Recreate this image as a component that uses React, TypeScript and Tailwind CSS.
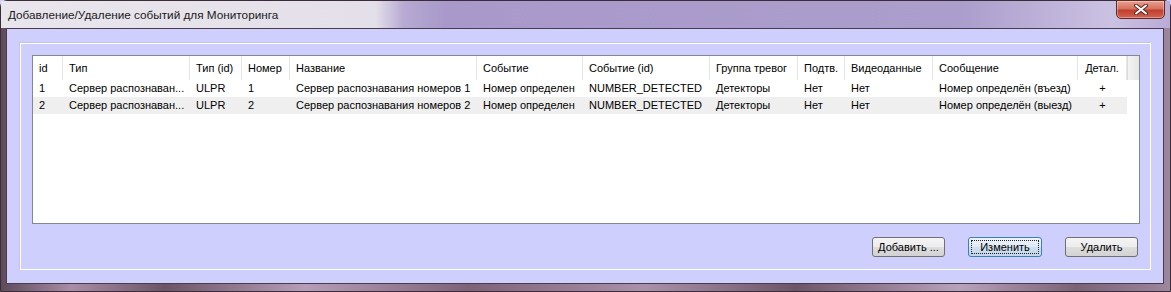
import React from "react";

const columns = [
  { title: "id", key: "id" },
  { title: "Тип", key: "type" },
  { title: "Тип (id)", key: "typeId" },
  { title: "Номер", key: "num" },
  { title: "Название", key: "name" },
  { title: "Событие", key: "event" },
  { title: "Событие (id)", key: "eventId" },
  { title: "Группа тревог", key: "group" },
  { title: "Подтв.", key: "confirm" },
  { title: "Видеоданные", key: "video" },
  { title: "Сообщение", key: "message" },
  { title: "Детал.", key: "details", center: true },
];

const rows = [
  {
    id: "1",
    type: "Сервер распознаван...",
    typeId: "ULPR",
    num: "1",
    name: "Сервер распознавания номеров 1",
    event: "Номер определен",
    eventId: "NUMBER_DETECTED",
    group: "Детекторы",
    confirm: "Нет",
    video: "Нет",
    message: "Номер определён (въезд)",
    details: "+",
  },
  {
    id: "2",
    type: "Сервер распознаван...",
    typeId: "ULPR",
    num: "2",
    name: "Сервер распознавания номеров 2",
    event: "Номер определен",
    eventId: "NUMBER_DETECTED",
    group: "Детекторы",
    confirm: "Нет",
    video: "Нет",
    message: "Номер определён (выезд)",
    details: "+",
  },
];

// same template for header and rows so the columns line up
const gridCols =
  "grid grid-cols-[30px_127px_52px_48px_187px_106px_127px_88px_47px_88px_145px_49px]";

const TitleBar = () => (
  <div className="h-[27px] flex justify-between bg-[linear-gradient(90deg,#e8e5ec_0%,#e4e0e9_32%,#b6a9d2_34.5%,#a899ca_38%,#ab9dcc_82%,#c4b9dd_92%,#cbc2e2_95%,#b9abd6_100%)]">
    <div className="pl-[7px] flex items-center text-[11.75px] text-[#1a1a1a]">
      Добавление/Удаление событий для Мониторинга
    </div>
    <div className="mr-[5px] w-[49px] h-[19px] -mt-[1px] rounded-b-[5px] border border-[#5e2a24] bg-[linear-gradient(180deg,#e9a090_0%,#d7715f_45%,#c0402f_55%,#d4624f_100%)] flex items-center justify-center shadow-[inset_0_0_0_1px_rgba(255,255,255,0.35)]">
      <svg width="14" height="11" viewBox="0 0 14 11">
        <path
          d="M2 1.5 L12 9.5 M12 1.5 L2 9.5"
          stroke="#5a2a24"
          strokeWidth="4"
          strokeLinecap="round"
        />
        <path
          d="M2 1.5 L12 9.5 M12 1.5 L2 9.5"
          stroke="#ffffff"
          strokeWidth="2"
          strokeLinecap="round"
        />
      </svg>
    </div>
  </div>
);

const ListView = () => (
  <div className="h-[169px] border border-[#828790] bg-white overflow-hidden">
    <div className="flex h-[24px]">
      <div className={gridCols}>
        {columns.map((c) => (
          <div
            key={c.key}
            className={`h-[24px] flex items-center border-r border-[#e3e5e8] whitespace-nowrap overflow-hidden ${
              c.center ? "justify-center" : "pl-[6px]"
            }`}
          >
            {c.title}
          </div>
        ))}
      </div>
      <div className="flex-1 bg-[linear-gradient(90deg,#f3f3f3,#e6e6e6)] border-l border-[#dcdcdc]" />
    </div>
    {rows.map((r, i) => (
      <div
        key={r.id}
        className={`${gridCols} w-[1094px] h-[17px] ${i % 2 === 1 ? "bg-[#efefef]" : "bg-white"}`}
      >
        {columns.map((c) => (
          <div
            key={c.key}
            className={`h-[17px] flex items-center whitespace-nowrap overflow-hidden ${
              c.center ? "justify-center" : "pl-[6px]"
            }`}
          >
            {(r as any)[c.key]}
          </div>
        ))}
      </div>
    ))}
  </div>
);

const Button = ({ label, focused }: { label: string; focused?: boolean }) => (
  <div
    className={`h-[20px] rounded-[3px] border flex items-center justify-center ${
      focused
        ? "w-[74px] border-[#3c7fb1] bg-[linear-gradient(180deg,#edf5fb_0%,#dde9f4_50%,#cfdfee_50%,#c3d6ea_100%)] p-[2px]"
        : "w-[73px] border-[#707070] bg-[linear-gradient(180deg,#f4f4f4_0%,#ececec_50%,#dedede_50%,#d2d2d2_100%)]"
    }`}
  >
    {focused ? (
      <div className="w-full h-full border border-dotted border-[#202020] flex items-center justify-center">
        {label}
      </div>
    ) : (
      label
    )}
  </div>
);

export default function App() {
  return (
    <div className="w-[1171px] h-[292px] overflow-hidden bg-[#cfcffe] font-['Liberation_Sans',Arial,sans-serif] text-[11px] text-black">
      <div className="h-full flex flex-col rounded-t-[7px] border border-[#3a2d39] bg-[linear-gradient(90deg,#5e4a5b_0%,#a78da6_6%,#6b5467_14%,#b59db7_26%,#7c6378_40%,#a991aa_55%,#6d5569_68%,#b8a2bb_82%,#7a6276_92%,#9d869e_100%)]">
        <TitleBar />
        <div className="flex-1 ml-[5px] mr-[6px] mb-[7px] border border-[#4a3c48] bg-[#cfcffe] pl-[13px] pt-[14px] pr-[12px] pb-[13px] flex">
          <div className="flex-1 flex flex-col border border-white shadow-[-1px_-1px_0_0_#c3c3ea] pl-[11px] pt-[11px] pr-[10px]">
            <ListView />
            <div className="mt-[13px] mr-[2px] flex justify-end gap-[23px]">
              <Button label="Добавить ..." />
              <Button label="Изменить" focused />
              <Button label="Удалить" />
            </div>
          </div>
        </div>
      </div>
    </div>
  );
}
